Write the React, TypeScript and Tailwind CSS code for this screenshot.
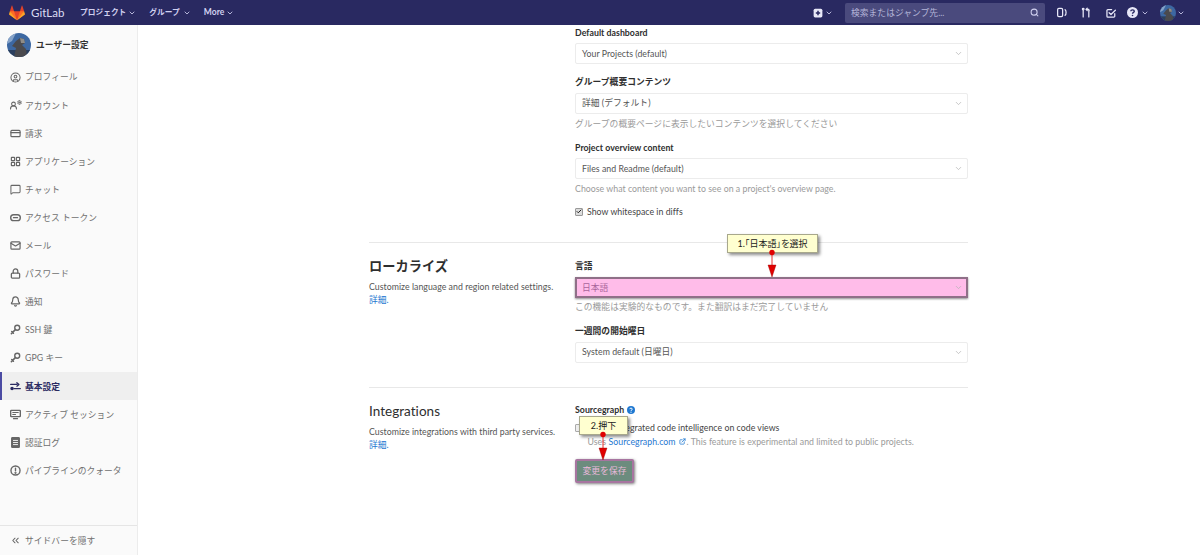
import React from "react";
import {
  CircleUser, CreditCard, LayoutGrid, MessageSquare, Mail, Lock, Bell, ChevronDown, ChevronsLeft, Search, ExternalLink, Check, UserRound, Settings,
} from "lucide-react";

const font = "font-['Lato','Noto_Sans_CJK_JP',sans-serif]";

function Tanuki() {
  return (
    <svg viewBox="0 0 36 36" className="w-[16px] h-[16px]">
      <path fill="#e24329" d="M2 14l9.38 9v-9l-4-12.28c-.205-.632-1.176-.632-1.38 0z" />
      <path fill="#e24329" d="M34 14l-9.38 9v-9l4-12.28c.205-.632 1.176-.632 1.38 0z" />
      <path fill="#e24329" d="M18,34.38 3,14 33,14 Z" />
      <path fill="#fc6d26" d="M18,34.38 11.38,14 2,14 6,25Z" />
      <path fill="#fc6d26" d="M18,34.38 24.62,14 34,14 30,25Z" />
      <path fill="#fca326" d="M2 14L.1 20.16c-.18.565 0 1.2.5 1.56l17.42 12.66z" />
      <path fill="#fca326" d="M34 14l1.9 6.16c.18.565 0 1.2-.5 1.56L18 34.38z" />
    </svg>
  );
}

function Avatar({ size }: { size: string }) {
  return (
    <svg viewBox="0 0 24 24" className={`rounded-full ${size}`}>
      <rect width="24" height="24" fill="#3d68a2" />
      <path d="M0 0H9L5 8L0 11Z" fill="#86a3c9" />
      <rect y="17" width="24" height="7" fill="#2b3f5e" />
      <path d="M9 8 L13 5 L17 6 L18 10 L15 12 L19 16 L20 24 L7 24 L9 15 L5 13 Z" fill="#4a4a4e" />
      <path d="M13 5 L17 6 L18 10 L14 10 Z" fill="#8e8c88" />
    </svg>
  );
}

const s12 = "w-[11px] h-[11px] shrink-0 text-[#666]";

function AccountIcon() {
  return (
    <span className="relative w-[11px] h-[11px] shrink-0 text-[#666]">
      <UserRound className="absolute left-[-1px] top-[1px] w-[9px] h-[9px]" strokeWidth={2.8} />
      <Settings className="absolute right-[-1px] top-0 w-[5px] h-[5px]" strokeWidth={4} />
    </span>
  );
}

function Sv({ children, className = s12 }: { children: React.ReactNode; className?: string }) {
  return (
    <svg viewBox="0 0 16 16" className={className} fill="none" stroke="currentColor" strokeWidth="2" strokeLinecap="round" strokeLinejoin="round">
      {children}
    </svg>
  );
}

const KeyI = () => (
  <Sv>
    <circle cx="10.5" cy="5.5" r="3.6" />
    <path d="M7.8 8.2 L2 14 M2.5 11 L5 13.5" strokeWidth="2.2" />
  </Sv>
);
const TokenI = () => (
  <Sv>
    <rect x="1" y="4" width="14" height="8.5" rx="4.25" />
    <path d="M5 8.2H11" strokeWidth="1.6" />
  </Sv>
);
const PrefI = () => (
  <Sv className="w-[11px] h-[11px] shrink-0 text-[#292961]">
    <circle cx="3" cy="11" r="1.6" fill="currentColor" />
    <path d="M6 11H15 M1 5H10 M10 2.5 L13 5 L10 7.5" strokeWidth="1.9" />
  </Sv>
);
const MonI = () => (
  <Sv>
    <rect x="1" y="2" width="14" height="9" rx="1" />
    <path d="M4 5H12 M4 8H8 M5 14H11" strokeWidth="1.6" />
  </Sv>
);
const LogI = () => (
  <Sv>
    <rect x="2.5" y="1" width="11" height="14" rx="1" fill="currentColor" />
    <path d="M5 5H11 M5 8H11 M5 11H11" stroke="#fafafa" strokeWidth="1.3" />
  </Sv>
);
const QuotaI = () => (
  <Sv>
    <circle cx="8" cy="8" r="6.6" />
    <path d="M8 4.5V8.5" strokeWidth="2" />
    <circle cx="8" cy="11.4" r="0.6" fill="currentColor" />
  </Sv>
);

const items: [React.ReactNode, string, boolean?][] = [
  [<CircleUser className={s12} strokeWidth={2.2} />, "プロフィール"],
  [<AccountIcon />, "アカウント"],
  [<CreditCard className={s12} strokeWidth={2.6} />, "請求"],
  [<LayoutGrid className={s12} strokeWidth={2.6} />, "アプリケーション"],
  [<MessageSquare className={s12} strokeWidth={2.2} />, "チャット"],
  [<TokenI />, "アクセス トークン"],
  [<Mail className={s12} strokeWidth={2.6} />, "メール"],
  [<Lock className={s12} strokeWidth={2.8} />, "パスワード"],
  [<Bell className={s12} strokeWidth={2.6} />, "通知"],
  [<KeyI />, "SSH 鍵"],
  [<KeyI />, "GPG キー"],
  [<PrefI />, "基本設定", true],
  [<MonI />, "アクティブ セッション"],
  [<LogI />, "認証ログ"],
  [<QuotaI />, "パイプラインのクォータ"],
];

function Select({ value, pink }: { value: string; pink?: boolean }) {
  return (
    <div
      className={
        pink
          ? "flex h-[21px] items-center justify-between border-2 border-[#8f7088] bg-[#ffbce9] pl-[5px] pr-[3px] text-[8.75px] text-[#a8649a] shadow-[0_1px_2px_rgba(0,0,0,0.45)]"
          : "flex h-[21px] items-center justify-between rounded-[2px] border border-[#ececec] bg-white pl-[6px] pr-[4px] text-[8.75px] text-[#555]"
      }
    >
      <span>{value}</span>
      <ChevronDown className="w-[9px] h-[9px] text-[#b5b5b5]" strokeWidth={2} />
    </div>
  );
}

function Label({ children, className = "" }: { children: React.ReactNode; className?: string }) {
  return <div className={`h-[14px] leading-[15px] text-[8.75px] font-bold text-[#2e2e2e] ${className}`}>{children}</div>;
}

function Hint({ children, className = "" }: { children: React.ReactNode; className?: string }) {
  return <div className={`h-[14px] leading-[14px] text-[8.75px] text-[#9a9a9a] ${className}`}>{children}</div>;
}

function Chev({ className = "" }: { className?: string }) {
  return <ChevronDown className={`w-[8px] h-[8px] ${className}`} strokeWidth={2.5} />;
}

function Callout({ children, className }: { children: React.ReactNode; className: string }) {
  return (
    <div className={`absolute flex items-center justify-center border border-[#a8a88c] bg-[#ffffd0] text-[9px] text-[#222] shadow-[2px_2px_3px_rgba(0,0,0,0.45)] [font-feature-settings:'palt'] ${className}`}>
      {children}
    </div>
  );
}

function Arrow({ className, height }: { className: string; height: number }) {
  return (
    <svg viewBox={`0 0 12 ${height}`} className={`absolute w-[12px] ${className}`} style={{ height }}>
      <line x1="6" y1="4" x2="6" y2={height - 10} stroke="#e83030" strokeWidth="1" />
      <circle cx="6" cy="3.5" r="2.7" fill="#e00000" />
      <path d={`M2 ${height - 12} L10 ${height - 12} L6 ${height} Z`} fill="#e00000" stroke="#900" strokeWidth="0.4" />
    </svg>
  );
}

export default function App() {
  const w = "text-[#e8e8f8]";
  return (
    <div className={`relative flex h-[555px] w-[1200px] flex-col overflow-hidden bg-white tracking-[0.035px] ${font}`}>
      <header className="flex h-[25px] shrink-0 items-center bg-[#292961] text-[#d1d1f0]">
        <div className="ml-[9px] flex items-center"><Tanuki /></div>
        <span className="ml-[6px] w-[49px] text-[11.5px] leading-none text-[#dcdcf2]">GitLab</span>
        <span className="text-[7.7px] font-bold">プロジェクト</span>
        <Chev className="ml-[2px]" />
        <span className="ml-[13px] text-[7.7px] font-bold">グループ</span>
        <Chev className="ml-[3px]" />
        <span className="ml-[13px] text-[8.5px] font-bold">More</span>
        <Chev className="ml-[2px]" />
        <div className="ml-auto flex items-center">
          <svg viewBox="0 0 16 16" className="w-[10px] h-[10px]">
            <rect x="1" y="1" width="14" height="14" rx="2.5" fill="#e8e8f8" />
            <path d="M8 4.5V11.5M4.5 8H11.5" stroke="#292961" strokeWidth="2.4" />
          </svg>
          <Chev className="ml-[2.5px]" />
          <div className="ml-[12px] flex h-[20px] w-[200px] items-center justify-between rounded-[2px] bg-[#4a4a7d] px-[6px] text-[8.75px] text-[#b5b5d8]">
            <span>検索またはジャンプ先...</span>
            <Search className="w-[9px] h-[9px] text-[#d1d1f0]" strokeWidth={2.8} />
          </div>
          <Sv className={`ml-[12px] w-[10px] h-[11px] ${w}`}>
            <rect x="1" y="1.5" width="8" height="13" rx="2" />
            <path d="M13 3.5C15 5 15 11 13 12.5" />
          </Sv>
          <Sv className={`ml-[14px] w-[10px] h-[11px] ${w}`}>
            <path d="M3.5 4V15 M12.5 7V15 M12.5 3H8 M10 1L8 3L10 5" />
            <circle cx="3.5" cy="2.5" r="1.3" />
            <circle cx="12.5" cy="5" r="0.6" />
          </Sv>
          <Sv className={`ml-[15px] w-[10px] h-[10px] ${w}`}>
            <path d="M14 9V13A1.5 1.5 0 0 1 12.5 14.5H3A1.5 1.5 0 0 1 1.5 13V4A1.5 1.5 0 0 1 3 2.5H9" />
            <path d="M5 7.5L8 10.5L15 3.5" />
          </Sv>
          <svg viewBox="0 0 16 16" className="ml-[11px] w-[11px] h-[11px]">
            <circle cx="8" cy="8" r="8" fill="#e8e8f8" />
            <path d="M5.5 6.2C5.5 3.6 10.6 3.6 10.6 6.2C10.6 8 8 7.8 8 9.8" fill="none" stroke="#292961" strokeWidth="2" />
            <circle cx="8" cy="12.4" r="1.2" fill="#292961" />
          </svg>
          <Chev className="ml-[3px]" />
          <div className="ml-[11px] flex"><Avatar size="w-[16px] h-[16px]" /></div>
          <Chev className="ml-[1px] mr-[15px]" />
        </div>
      </header>

      <div className="flex min-h-0 flex-1">
        <aside className="flex w-[138px] shrink-0 flex-col border-r border-[#ececec] bg-[#fafafa]">
          <div className="flex h-[38px] items-center pl-[7px] pt-[1px]">
            <Avatar size="w-[24px] h-[24px]" />
            <span className="ml-[5px] text-[8.75px] font-bold text-[#333]">ユーザー設定</span>
          </div>
          <nav className="flex-1">
            {items.map(([icon, label, active], i) => (
              <div
                key={i}
                className={
                  active
                    ? "flex h-[28.1px] items-center gap-[4px] border-l-[2px] border-[#4b4ba3] bg-[#efefef] pl-[8px] text-[8.75px] font-bold text-[#292961]"
                    : "flex h-[28.1px] items-center gap-[4px] pl-[10px] text-[8.75px] text-[#707070]"
                }
              >
                {icon}
                <span>{label}</span>
              </div>
            ))}
          </nav>
          <div className="flex h-[30px] items-center gap-[4px] border-t border-[#e5e5e5] pl-[10px] text-[8.75px] text-[#707070]">
            <ChevronsLeft className={s12} strokeWidth={2.2} />
            <span>サイドバーを隠す</span>
          </div>
        </aside>

        <main className="relative flex-1">
          <div className="ml-[231px] w-[599px]">
            <div className="ml-[206px] w-[393px]">
              <Label className="mb-[4px]">Default dashboard</Label>
              <Select value="Your Projects (default)" />
              <Label className="mt-[10px] mb-[4.5px]">グループ概要コンテンツ</Label>
              <Select value="詳細 (デフォルト)" />
              <Hint className="mt-[3px]">グループの概要ページに表示したいコンテンツを選択してください</Hint>
              <Label className="mt-[9px] mb-[4.5px]">Project overview content</Label>
              <Select value="Files and Readme (default)" />
              <Hint className="mt-[3px]">Choose what content you want to see on a project's overview page.</Hint>
              <div className="mt-[8.5px] flex h-[14px] items-center text-[8.75px] text-[#444]">
                <span className="flex h-[8px] w-[8px] items-center justify-center rounded-[1px] border border-[#999] bg-[#dcdcdc]">
                  <Check className="w-[7px] h-[7px] text-[#222]" strokeWidth={4} />
                </span>
                <span className="ml-[4px]">Show whitespace in diffs</span>
              </div>
            </div>
            <div className="mt-[23px] border-t border-[#e8e8e8]" />
            <div className="flex pt-[15.5px]">
              <div className="w-[206px]">
                <h3 className="h-[16px] text-[13.2px] font-bold leading-[16px] text-[#2e2e2e]">ローカライズ</h3>
                <p className="mt-[6px] text-[8.75px] leading-[13px] text-[#555]">Customize language and region related settings.</p>
                <a className="block text-[8.75px] leading-[13px] text-[#1f78d1]">詳細.</a>
              </div>
              <div className="w-[393px]">
                <Label className="mb-[5px]">言語</Label>
                <Select value="日本語" pink />
                <Hint className="mt-[2px]">この機能は実験的なものです。また翻訳はまだ完了していません</Hint>
                <Label className="mt-[9px] mb-[4.5px]">一週間の開始曜日</Label>
                <Select value="System default (日曜日)" />
              </div>
            </div>
            <div className="mt-[24.5px] border-t border-[#e8e8e8]" />
            <div className="flex pt-[14.5px]">
              <div className="w-[206px]">
                <h3 className="h-[16px] text-[13.5px] font-normal leading-[16px] text-[#2e2e2e]">Integrations</h3>
                <p className="mt-[6px] text-[8.75px] leading-[13px] text-[#555]">Customize integrations with third party services.</p>
                <a className="block text-[8.75px] leading-[13px] text-[#1f78d1]">詳細.</a>
              </div>
              <div className="w-[393px]">
                <Label className="flex items-center gap-[3px]">
                  Sourcegraph
                  <svg viewBox="0 0 16 16" className="w-[8px] h-[8px]">
                    <circle cx="8" cy="8" r="8" fill="#1f78d1" />
                    <path d="M5.5 6.2C5.5 3.6 10.6 3.6 10.6 6.2C10.6 8 8 7.8 8 9.8" fill="none" stroke="#fff" strokeWidth="2" />
                    <circle cx="8" cy="12.4" r="1.2" fill="#fff" />
                  </svg>
                </Label>
                <div className="mt-[4px] flex h-[14px] items-center text-[8.75px] text-[#444]">
                  <span className="h-[8px] w-[8px] rounded-[1px] border border-[#aaa] bg-[#eee]" />
                  <span className="ml-[4px]">Enable integrated code intelligence on code views</span>
                </div>
                <div className="flex h-[14px] items-center pl-[12.5px] text-[8.75px] text-[#9a9a9a]">
                  <span>Uses</span>
                  <a className="ml-[2.5px] text-[#1f78d1]">Sourcegraph.com</a>
                  <ExternalLink className="ml-[3px] w-[7px] h-[7px] text-[#1f78d1]" strokeWidth={2.6} />
                  <span className="ml-[1px]">. This feature is experimental and limited to public projects.</span>
                </div>
                <button className="mt-[10px] flex h-[24px] w-[59px] items-center justify-center rounded-[2px] border-2 border-[#a775a0] bg-[#6c8c7e] text-[8.75px] text-[#eab9db] shadow-[1px_1px_3px_rgba(0,0,0,0.5)]">
                  変更を保存
                </button>
              </div>
            </div>
          </div>
        </main>
      </div>

      <Callout className="left-[727px] top-[234px] h-[19px] w-[91px]">1.「日本語」を選択</Callout>
      <Arrow className="left-[766px] top-[249px]" height={28} />
      <Callout className="left-[579px] top-[416px] h-[19px] w-[49px]">2.押下</Callout>
      <Arrow className="left-[597px] top-[431px]" height={29} />
    </div>
  );
}
